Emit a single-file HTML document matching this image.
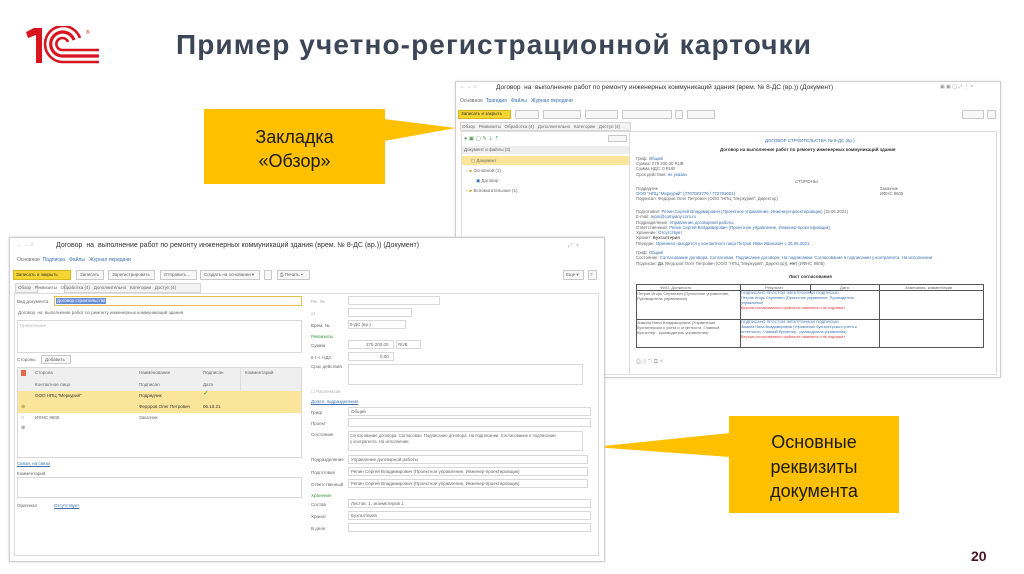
<!DOCTYPE html>
<html><head><meta charset="utf-8"><style>
*{margin:0;padding:0;box-sizing:border-box}
body{width:1024px;height:574px;background:#fff;position:relative;overflow:hidden;font-family:"Liberation Sans",sans-serif}
.a{position:absolute}
.t{position:absolute;font-size:5px;color:#666;white-space:nowrap;line-height:6px}
.f{position:absolute;border:1px solid #d8d8d8;background:#fff}
.b{position:absolute;border:1px solid #c8c8c8;background:#f7f7f7;border-radius:1px}
.lk{color:#3a6fb0}
.gr{color:#3a9a3a}
.ln{position:absolute;height:1px;background:#999}
</style></head><body>

<svg class="a" style="left:24px;top:26px" width="80" height="40" viewBox="0 0 80 40">
<g fill="#d8141f">
<path d="M2 6 L10 2 L18 2 L18 37 L12 37 L12 9 L4 12 Z"/>
</g>
<g fill="none" stroke="#d8141f" stroke-width="3.2">
<path d="M50 14 A12 12 0 1 0 38 30 L75 30"/>
<path d="M44 16 A6 6 0 1 0 38 24 L75 24" stroke-width="2.6"/>
<path d="M56 12 A18 18 0 1 0 38 36 L75 36" stroke-width="2.6"/>
</g>
<text x="62" y="8" font-size="5" fill="#d8141f" font-family="Liberation Sans">®</text>
</svg>

<div class="a" style="left:176px;top:29px;font-size:28px;font-weight:bold;color:#3d4656;letter-spacing:1.1px;white-space:nowrap">Пример учетно-регистрационной карточки</div>

<!-- TOP RIGHT SCREENSHOT -->
<div class="a" style="left:455px;top:81px;width:546px;height:297px;border:1px solid #cfcfcf;background:#fff;box-shadow:0 0 2px #ddd"></div>
<div class="t" style="left:460px;top:84px;color:#888">← → ☆</div>
<div class="t" style="left:496px;top:84px;font-size:6.5px;color:#333;line-height:8px">Договор &nbsp;на &nbsp;выполнение работ по ремонту инженерных коммуникаций здания (врем. № 8-ДС (вр.)) (Документ)</div>
<div class="t" style="left:940px;top:84px;color:#999">▣ ▣ ▢ ⤢ ⋮ ×</div>
<div class="t" style="left:460px;top:98px"><span>Основное</span> &nbsp;<span class="lk">Трагедия &nbsp; Файлы &nbsp; Журнал передачи</span></div>
<div class="a" style="left:458px;top:110px;width:53px;height:9px;background:#f5d532;border:1px solid #d7b520"></div>
<div class="t" style="left:461px;top:111px;font-size:4.5px;color:#333">Записать и закрыть</div>
<div class="b" style="left:515px;top:110px;width:24px;height:9px"></div>
<div class="b" style="left:543px;top:110px;width:38px;height:9px"></div>
<div class="b" style="left:585px;top:110px;width:33px;height:9px"></div>
<div class="b" style="left:622px;top:110px;width:50px;height:9px"></div>
<div class="b" style="left:675px;top:110px;width:8px;height:9px"></div>
<div class="b" style="left:687px;top:110px;width:28px;height:9px"></div>
<div class="b" style="left:962px;top:110px;width:22px;height:9px"></div>
<div class="b" style="left:987px;top:110px;width:9px;height:9px"></div>
<div class="a" style="left:460px;top:122px;width:171px;height:9px;border:1px solid #d6d6d6;background:#f3f3f3"></div>
<div class="t" style="left:462px;top:124px;font-size:4.5px">Обзор &nbsp; Реквизиты &nbsp; Обработка (4) &nbsp; Дополнительно &nbsp; Категории &nbsp; Доступ (4)</div>
<div class="a" style="left:461px;top:131px;width:536px;height:244px;border:1px solid #dcdcdc"></div>
<div class="t" style="left:464px;top:136px;color:#5a9a5a;font-size:5.5px">● ▣ ▢ ✎ ⇣ ⇡</div>
<div class="b" style="left:608px;top:135px;width:19px;height:7px"></div>
<div class="a" style="left:462px;top:146px;width:167px;height:8px;background:#eeeeee"></div>
<div class="t" style="left:464px;top:147px;font-size:4.5px">Документ и файлы (3)</div>
<div class="a" style="left:462px;top:156px;width:167px;height:9px;background:#fbe59a"></div>
<div class="t" style="left:471px;top:158px;font-size:4.5px">▢ Документ</div>
<div class="t" style="left:466px;top:168px;font-size:4.5px">› <span style="color:#d4a020">▰</span> Основной (1)</div>
<div class="t" style="left:476px;top:178px;font-size:4.5px"><span class="lk">▣</span> Договор</div>
<div class="t" style="left:466px;top:188px;font-size:4.5px">› <span style="color:#d4a020">▰</span> Вспомогательные (1)</div>
<div class="a" style="left:629px;top:132px;width:1px;height:243px;background:#ddd"></div>
<div class="t lk" style="left:765px;top:138px;font-size:4.5px">ДОГОВОР СТРОИТЕЛЬСТВА № 8-ДС (вр.)</div>
<div class="t" style="left:720px;top:147px;font-size:4.5px;color:#333;font-weight:bold">Договор на выполнение работ по ремонту инженерных коммуникаций здания</div>
<div class="t" style="left:636px;top:156px;font-size:4.3px;line-height:5.2px">Гриф: <span class="lk">Общий</span><br>Сумма: 279 200,00 RUB<br>Сумма НДС: 0 RUB<br>Срок действия: <span class="lk">не указан</span></div>
<div class="t" style="left:795px;top:179px;font-size:4.5px">СТОРОНЫ</div>
<div class="t" style="left:636px;top:186px;font-size:4.3px;line-height:5.2px">Подрядчик<br><span class="lk">ООО "НПЦ "Меркурий" (7707083779 / 772701001)</span><br>Подписал: Федоров Олег Петрович (ООО "НПЦ "Меркурий", Директор)</div>
<div class="t" style="left:880px;top:186px;font-size:4.3px;line-height:5.2px">Заказчик<br>ИФНС 9605</div>
<div class="t" style="left:636px;top:209px;font-size:4.3px;line-height:5.3px">Подготовил: <span class="lk">Репин Сергей Владимирович (Проектное управление, Инженер-проектировщик)</span> (15.06.2021)<br>E-mail: <span class="lk">repin@company.com.ru</span><br>Подразделение: <span class="lk">Управление договорной работы</span><br>Ответственный: <span class="lk">Репин Сергей Владимирович (Проектное управление, Инженер-проектировщик)</span><br>Хранение: <span class="lk">Отсутствует</span><br>Хранит: <b>Бухгалтерия</b><br>Передан: <span class="lk">Оригинал находится у контактного лица Петров Иван Иванович с 25.06.2021</span></div>
<div class="t" style="left:636px;top:250px;font-size:4.3px;line-height:5.3px">Гриф: <span class="lk">Общий</span><br>Состояние: <span class="lk">Согласование договора. Согласован. Подписание договора. На подписании. Согласование в подписании у контрагента. На исполнении</span><br>Подписан: <b>Да</b> (Федоров Олег Петрович (ООО "НПЦ "Меркурий", Директор)), <b>Нет</b> (ИФНС 9605)</div>
<div class="t" style="left:789px;top:274px;font-size:4.5px;font-weight:bold;color:#333">Лист согласования</div>
<div class="a" style="left:636px;top:284px;width:348px;height:64px;border:1px solid #555"></div>
<div class="a" style="left:740px;top:284px;width:1px;height:64px;background:#555"></div>
<div class="a" style="left:810px;top:284px;width:1px;height:9px;background:#555"></div>
<div class="a" style="left:879px;top:284px;width:1px;height:64px;background:#555"></div>
<div class="ln" style="left:636px;top:290px;width:348px;background:#555"></div>
<div class="ln" style="left:636px;top:319px;width:348px;background:#555"></div>
<div class="t" style="left:660px;top:285px;font-size:4px">ФИО, Должность</div>
<div class="t" style="left:765px;top:285px;font-size:4px">Результат</div>
<div class="t" style="left:840px;top:285px;font-size:4px">Дата</div>
<div class="t" style="left:905px;top:285px;font-size:4px">Замечания, комментарии</div>
<div class="t" style="left:637px;top:292px;font-size:4px;line-height:4.8px">Петров Игорь Сергеевич (Проектное управление,<br>Руководитель управления)</div>
<div class="t" style="left:741px;top:291px;font-size:3.8px;line-height:5px"><span class="lk">ПОДПИСАНО ПРОСТОЙ ЭЛЕКТРОННОЙ ПОДПИСЬЮ<br>Петров Игорь Сергеевич (Проектное управление, Руководитель<br>управления)</span><br><span style="color:#d33">Версия согласованного файла не изменена и не подлежит</span></div>
<div class="t" style="left:637px;top:321px;font-size:4px;line-height:4.8px">Зимина Нина Владимировна (Управление<br>бухгалтерского учета и отчетности, Главный<br>бухгалтер - руководитель управления)</div>
<div class="t" style="left:741px;top:320px;font-size:3.8px;line-height:5px"><span class="lk">ПОДПИСАНО ПРОСТОЙ ЭЛЕКТРОННОЙ ПОДПИСЬЮ<br>Зимина Нина Владимировна (Управление бухгалтерского учета и<br>отчетности, Главный бухгалтер - руководитель управления)</span><br><span style="color:#d33">Версия согласованного файла не изменена и не подлежит</span></div>
<div class="t" style="left:636px;top:359px;font-size:6px;color:#aaa">⎙ ⊙ ⁺¹ ⧉ ×</div>

<svg class="a" style="left:0;top:0" width="1024" height="574">
<polygon points="384,119 456,128 384,141" fill="#ffc000"/>
<polygon points="730,433 594,447 730,457" fill="#ffc000"/>
</svg>
<div class="a" style="left:204px;top:109px;width:181px;height:75px;background:#ffc000"></div>
<div class="a" style="left:204px;top:125px;width:181px;text-align:center;font-size:18px;line-height:24px;color:#1a1a1a">Закладка<br>«Обзор»</div>

<!-- BOTTOM LEFT SCREENSHOT -->
<div class="a" style="left:9px;top:237px;width:596px;height:325px;border:1px solid #cfcfcf;background:#fff;box-shadow:0 0 2px #ccc"></div>
<div class="t" style="left:17px;top:242px;color:#888">← → ☆</div>
<div class="t" style="left:56px;top:241px;font-size:7px;color:#333;line-height:9px">Договор &nbsp;на &nbsp;выполнение работ по ремонту инженерных коммуникаций здания (врем. № 8-ДС (вр.)) (Документ)</div>
<div class="t" style="left:568px;top:243px;color:#999">⤢ ⋮ ×</div>
<div class="t" style="left:17px;top:257px">Основное &nbsp;<span class="lk">Подписка &nbsp; Файлы &nbsp; Журнал передачи</span></div>
<div class="a" style="left:13px;top:270px;width:58px;height:10px;background:#f5d532;border:1px solid #d7b520"></div>
<div class="t" style="left:16px;top:272px;font-size:4.6px;color:#333">Записать и закрыть</div>
<div class="b" style="left:76px;top:270px;width:28px;height:10px"></div><div class="t" style="left:80px;top:272px;font-size:4.5px">Записать</div>
<div class="b" style="left:108px;top:270px;width:47px;height:10px"></div><div class="t" style="left:112px;top:272px;font-size:4.5px">Зарегистрировать</div>
<div class="b" style="left:160px;top:270px;width:37px;height:10px"></div><div class="t" style="left:164px;top:272px;font-size:4.5px">Отправить...</div>
<div class="b" style="left:200px;top:270px;width:60px;height:10px"></div><div class="t" style="left:204px;top:272px;font-size:4.5px">Создать на основании ▾</div>
<div class="b" style="left:264px;top:270px;width:8px;height:10px"></div>
<div class="b" style="left:277px;top:270px;width:33px;height:10px"></div><div class="t" style="left:280px;top:272px;font-size:4.5px">⎙ Печать ▾</div>
<div class="b" style="left:563px;top:270px;width:21px;height:10px"></div><div class="t" style="left:566px;top:272px;font-size:4.5px">Еще ▾</div>
<div class="b" style="left:588px;top:270px;width:9px;height:10px"></div><div class="t" style="left:590px;top:272px;font-size:4.5px">?</div>
<div class="a" style="left:15px;top:283px;width:186px;height:10px;border:1px solid #d6d6d6;background:#f3f3f3"></div>
<div class="a" style="left:37px;top:283px;width:28px;height:11px;background:#fff;border:1px solid #d6d6d6;border-bottom:none"></div>
<div class="t" style="left:18px;top:285px;font-size:4.5px">Обзор &nbsp; Реквизиты &nbsp; Обработка (4) &nbsp; Дополнительно &nbsp; Категории &nbsp; Доступ (4)</div>
<div class="a" style="left:14px;top:293px;width:585px;height:263px;border:1px solid #dcdcdc"></div>
<div class="t" style="left:17px;top:299px;font-size:4.5px">Вид документа</div>
<div class="f" style="left:54px;top:296px;width:248px;height:10px;border-color:#e6c14a"></div>
<div class="a" style="left:56px;top:298px;width:50px;height:6px;background:#6b8fd6"></div>
<div class="t" style="left:57px;top:298px;font-size:4.5px;color:#fff">Договор строительства</div>
<div class="t" style="left:18px;top:310px;font-size:4.5px">Договор &nbsp;на &nbsp;выполнение работ по ремонту инженерных коммуникаций здания</div>
<div class="f" style="left:17px;top:320px;width:285px;height:33px"></div>
<div class="t" style="left:20px;top:323px;color:#bbb;font-size:4.5px">Примечание</div>
<div class="t" style="left:17px;top:357px;font-size:4.5px">Стороны</div>
<div class="b" style="left:41px;top:355px;width:30px;height:9px"></div><div class="t" style="left:45px;top:357px;font-size:4.5px">Добавить</div>
<div class="f" style="left:17px;top:367px;width:285px;height:91px"></div>
<div class="a" style="left:18px;top:368px;width:283px;height:23px;background:#efefef"></div>
<div class="a" style="left:21px;top:370px;width:5px;height:6px;background:#e06a4a"></div>
<div class="t" style="left:35px;top:370px;font-size:4.5px">Сторона</div><div class="t" style="left:139px;top:370px;font-size:4.5px">Наименование</div><div class="t" style="left:203px;top:370px;font-size:4.5px">Подписан</div><div class="t" style="left:245px;top:370px;font-size:4.5px">Комментарий</div>
<div class="t" style="left:35px;top:382px;font-size:4.5px">Контактное лицо</div><div class="t" style="left:139px;top:382px;font-size:4.5px">Подписал</div><div class="t" style="left:203px;top:382px;font-size:4.5px">Дата</div>
<div class="a" style="left:240px;top:368px;width:1px;height:23px;background:#ddd"></div>
<div class="a" style="left:18px;top:391px;width:283px;height:22px;background:#fbe59a"></div>
<div class="t" style="left:35px;top:393px;font-size:4.5px;color:#333">ООО НПЦ "Меркурий"</div><div class="t" style="left:139px;top:393px;font-size:4.5px;color:#333">Подрядчик</div><div class="t" style="left:203px;top:391px;font-size:7px;color:#3a9a3a">✓</div>
<div class="t" style="left:21px;top:404px;font-size:5px;color:#a07a20">⊕</div><div class="t" style="left:139px;top:404px;font-size:4.5px;color:#333">Федоров Олег Петрович</div><div class="t" style="left:203px;top:404px;font-size:4.5px;color:#333">06.10.21</div>
<div class="t" style="left:21px;top:415px;font-size:5px">○</div><div class="t" style="left:35px;top:415px;font-size:4.5px">ИФНС 9605</div><div class="t" style="left:139px;top:415px;font-size:4.5px">Заказчик</div>
<div class="t" style="left:21px;top:425px;font-size:5px">⊕</div>
<div class="t lk" style="left:17px;top:461px;font-size:4.5px;text-decoration:underline">Связи, на связи</div>
<div class="t" style="left:17px;top:471px;font-size:4.5px">Комментарий</div>
<div class="f" style="left:17px;top:477px;width:285px;height:21px"></div>
<div class="t" style="left:17px;top:503px;font-size:4.5px">Оригинал</div><div class="t lk" style="left:54px;top:503px;font-size:4.5px;text-decoration:underline">Отсутствует</div>
<div class="t" style="left:311px;top:299px;font-size:4.5px;color:#aaa">Рег. №</div><div class="f" style="left:348px;top:296px;width:92px;height:9px"></div>
<div class="t" style="left:311px;top:311px;font-size:4.5px;color:#aaa">от</div><div class="f" style="left:348px;top:308px;width:64px;height:9px"></div>
<div class="t" style="left:311px;top:323px;font-size:4.5px">Врем. №</div><div class="f" style="left:348px;top:320px;width:58px;height:9px"></div><div class="t" style="left:350px;top:322px;font-size:4.5px">8-ДС (вр.)</div>
<div class="t gr" style="left:311px;top:334px;font-size:4.5px">Реквизиты</div>
<div class="t" style="left:311px;top:343px;font-size:4.5px">Сумма</div><div class="f" style="left:348px;top:340px;width:46px;height:9px"></div><div class="t" style="left:366px;top:342px;font-size:4.5px">279 200,00</div><div class="f" style="left:396px;top:340px;width:25px;height:9px"></div><div class="t" style="left:398px;top:342px;font-size:4.5px">RUB</div>
<div class="t" style="left:311px;top:355px;font-size:4.5px">в т.ч. НДС</div><div class="f" style="left:348px;top:352px;width:46px;height:9px"></div><div class="t" style="left:380px;top:354px;font-size:4.5px">0,00</div>
<div class="t" style="left:311px;top:364px;font-size:4.5px">Срок действия</div><div class="f" style="left:348px;top:364px;width:235px;height:21px"></div>
<div class="t" style="left:311px;top:389px;font-size:4.5px;color:#aaa">☐ Распечатан</div>
<div class="t lk" style="left:311px;top:399px;font-size:4.5px;text-decoration:underline">Допол. подразделения</div>
<div class="t" style="left:311px;top:410px;font-size:4.5px">Гриф</div><div class="f" style="left:348px;top:407px;width:243px;height:9px"></div><div class="t" style="left:351px;top:409px;font-size:4.5px">Общий</div>
<div class="t" style="left:311px;top:421px;font-size:4.5px">Проект</div><div class="f" style="left:348px;top:418px;width:243px;height:9px"></div>
<div class="t" style="left:311px;top:432px;font-size:4.5px">Состояние</div><div class="f" style="left:348px;top:431px;width:235px;height:20px"></div>
<div class="t" style="left:350px;top:433px;font-size:4.2px;line-height:6px">Согласование договора. Согласован. Подписание договора. На подписании. Согласование в подписании<br>у контрагента. На исполнении</div>
<div class="t" style="left:311px;top:457px;font-size:4.5px">Подразделение</div><div class="f" style="left:348px;top:455px;width:240px;height:9px"></div><div class="t" style="left:351px;top:457px;font-size:4.5px">Управление договорной работы</div>
<div class="t" style="left:311px;top:470px;font-size:4.5px">Подготовил</div><div class="f" style="left:348px;top:467px;width:240px;height:9px"></div><div class="t" style="left:351px;top:469px;font-size:4.5px">Репин Сергей Владимирович (Проектное управление, Инженер-проектировщик)</div>
<div class="t" style="left:311px;top:482px;font-size:4.5px">Ответственный</div><div class="f" style="left:348px;top:479px;width:240px;height:9px"></div><div class="t" style="left:351px;top:481px;font-size:4.5px">Репин Сергей Владимирович (Проектное управление, Инженер-проектировщик)</div>
<div class="t gr" style="left:311px;top:493px;font-size:4.5px">Хранение</div>
<div class="t" style="left:311px;top:502px;font-size:4.5px">Состав</div><div class="f" style="left:348px;top:499px;width:243px;height:9px"></div><div class="t" style="left:351px;top:501px;font-size:4.5px">Листов: 1, экземпляров 1</div>
<div class="t" style="left:311px;top:514px;font-size:4.5px">Хранит</div><div class="f" style="left:348px;top:511px;width:243px;height:9px"></div><div class="t" style="left:351px;top:513px;font-size:4.5px">Бухгалтерия</div>
<div class="t" style="left:311px;top:526px;font-size:4.5px">В деле</div><div class="f" style="left:348px;top:523px;width:243px;height:9px"></div>

<div class="a" style="left:729px;top:416px;width:170px;height:97px;background:#ffc000"></div>
<div class="a" style="left:729px;top:430px;width:170px;text-align:center;font-size:18px;line-height:24.5px;color:#1a1a1a">Основные<br>реквизиты<br>документа</div>

<div class="a" style="left:971px;top:548px;font-size:14px;font-weight:bold;color:#4a1525">20</div>
</body></html>
